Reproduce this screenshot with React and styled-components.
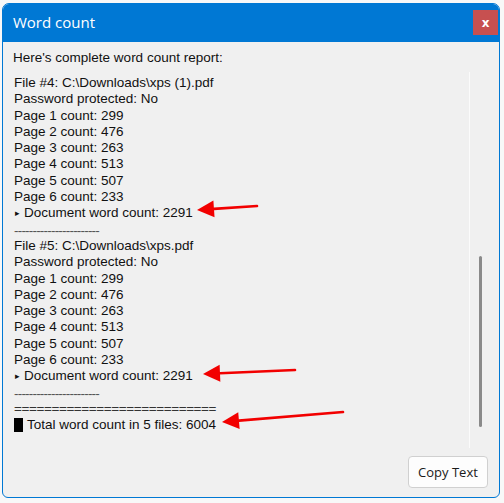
import React from "react";
import styled, { createGlobalStyle } from "styled-components";

const GlobalStyle = createGlobalStyle`
  html, body {
    margin: 0;
    padding: 0;
    background: #f8f8f8;
  }
  #root {
    position: relative;
    width: 504px;
    height: 503px;
    overflow: hidden;
  }
`;

const files = [
  { id: 4, path: "C:\\Downloads\\xps (1).pdf", pages: [299, 476, 263, 513, 507, 233], total: 2291 },
  { id: 5, path: "C:\\Downloads\\xps.pdf", pages: [299, 476, 263, 513, 507, 233], total: 2291 },
];

const App = () => {
  return (
    <>
      <GlobalStyle />
      <Page>
        <Window>
          <TitleBar>
            <Title>Word count</Title>
            <CloseButton>x</CloseButton>
          </TitleBar>
          <Body>
            <Label>Here's complete word count report:</Label>
            <ReportBox>
              <Report>
                {files.map(file => (
                  <React.Fragment key={file.id}>
                    <Line>File #{file.id}: {file.path}</Line>
                    <Line>Password protected: No</Line>
                    {file.pages.map((count, i) => (
                      <Line key={i}>Page {i + 1} count: {count}</Line>
                    ))}
                    <Line><Marker>▸</Marker>Document word count: {file.total}</Line>
                    <Dashes>-----------------------</Dashes>
                  </React.Fragment>
                ))}
                <Equals>===========================</Equals>
                <Line><Block />Total word count in 5 files: 6004</Line>
              </Report>
              <ScrollTrack>
                <Thumb $offset={184} $size={171} />
              </ScrollTrack>
            </ReportBox>
            <Footer>
              <CopyButton>Copy Text</CopyButton>
            </Footer>
          </Body>
        </Window>
        <Arrows width="504" height="503" viewBox="0 0 504 503">
          <Arrow x1={257} y1={206} x2={197} y2={210} />
          <Arrow x1={295} y1={370} x2={203} y2={374} />
          <Arrow x1={343} y1={412} x2={222} y2={422} />
        </Arrows>
      </Page>
    </>
  );
};

const Arrow = ({ x1, y1, x2, y2 }) => {
  const dx = x1 - x2;
  const dy = y1 - y2;
  const len = Math.sqrt(dx * dx + dy * dy);
  const ux = dx / len;
  const uy = dy / len;
  const bx = x2 + ux * 17;
  const by = y2 + uy * 17;
  const px = -uy * 8.5;
  const py = ux * 8.5;
  return (
    <g>
      <line x1={x1} y1={y1} x2={bx} y2={by} stroke="#f20000" strokeWidth="2.6" strokeLinecap="round" />
      <polygon
        points={`${x2},${y2} ${bx + px},${by + py} ${bx - px},${by - py}`}
        fill="#f20000"
      />
    </g>
  );
};

export default App;

const Page = styled.div`
  width: 504px;
  height: 503px;
  padding: 3px 4px 5px 2px;
  box-sizing: border-box;
  display: flex;
`;

const Window = styled.div`
  flex: 1;
  display: flex;
  flex-direction: column;
  border: 1px solid #0078d4;
  border-radius: 7px 7px 6px 6px;
  background: #f0f0f0;
  overflow: hidden;
`;

const TitleBar = styled.div`
  height: 38px;
  flex-shrink: 0;
  background: #0078d4;
  display: flex;
  align-items: center;
  justify-content: space-between;
  padding: 0 1px 0 10px;
`;

const Title = styled.div`
  font-family: "Open Sans", "Noto Sans", sans-serif;
  font-size: 15px;
  color: #ffffff;
  padding-bottom: 2px;
`;

const CloseButton = styled.div`
  width: 25px;
  height: 25px;
  margin-top: -1px;
  background: #c75050;
  color: #ffffff;
  font-family: "DejaVu Sans", sans-serif;
  font-weight: bold;
  font-size: 12px;
  display: flex;
  align-items: center;
  justify-content: center;
`;

const Body = styled.div`
  flex: 1;
  display: flex;
  flex-direction: column;
  padding: 8px 11px 9px 8px;
  font-family: "Liberation Sans", Arial, sans-serif;
  color: #111111;
`;

const Label = styled.div`
  font-size: 13.5px;
  line-height: 16px;
  padding-left: 2px;
`;

const ReportBox = styled.div`
  margin-top: 6px;
  height: 376px;
  display: flex;
`;

const Report = styled.div`
  flex: 1;
  padding: 3px 0 0 3px;
  font-size: 13.5px;
  line-height: 16.3px;
`;

const Line = styled.div`
  height: 16.3px;
  white-space: nowrap;
  display: flex;
  align-items: center;
`;

const Marker = styled.span`
  font-size: 9px;
  margin: 0 4px 0 1px;
`;

const Dashes = styled(Line)`
  letter-spacing: -0.8px;
  color: #555;
  align-items: flex-end;
  line-height: 14px;
`;

const Equals = styled(Line)`
  letter-spacing: -0.4px;
  color: #333;
`;

const Block = styled.span`
  display: inline-block;
  width: 9px;
  height: 14px;
  background: #000;
  margin-right: 4px;
`;

const ScrollTrack = styled.div`
  width: 16px;
  margin-right: 3px;
  border-left: 1px solid #fbfbfb;
  box-sizing: border-box;
  display: flex;
  flex-direction: column;
  align-items: flex-end;
  padding-right: 3px;
`;

const Thumb = styled.div`
  width: 3px;
  margin-top: ${p => p.$offset}px;
  height: ${p => p.$size}px;
  border-radius: 2px;
  background: #8a8a8a;
`;

const Footer = styled.div`
  margin-top: 8px;
  display: flex;
  justify-content: flex-end;
`;

const CopyButton = styled.button`
  width: 80px;
  height: 32px;
  background: #fdfdfd;
  border: 1px solid #d0d0d0;
  border-radius: 4px;
  font-family: "Open Sans", "Noto Sans", sans-serif;
  font-size: 13px;
  color: #1a1a1a;
  padding: 0;
`;

const Arrows = styled.svg`
  position: absolute;
  top: 0;
  left: 0;
  pointer-events: none;
`;
